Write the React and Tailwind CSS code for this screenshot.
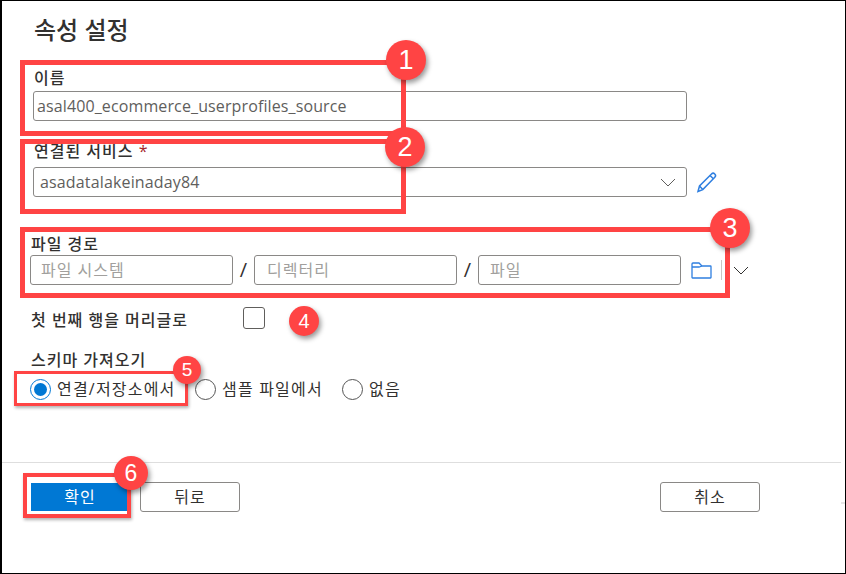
const FONT = "font-['Open_Sans','Noto_Sans_CJK_KR',sans-serif]"

const Badge = ({ n, className }) => (
  <div className={`absolute flex items-center justify-center rounded-full bg-[#ff4444] text-white shadow-[2px_3px_5px_rgba(0,0,0,0.4)] font-['Liberation_Sans',sans-serif] ${className}`}>
    {n}
  </div>
)

const Chevron = ({ className }) => (
  <svg className={className} width="16" height="9" viewBox="0 0 16 9" fill="none" stroke="currentColor" strokeWidth="1">
    <path d="M1 1l7 7 7-7" />
  </svg>
)

const Radio = ({ checked, label, className }) => (
  <label className={`flex items-center ${className}`}>
    <span className={`flex h-[21px] w-[21px] shrink-0 items-center justify-center rounded-full border ${checked ? 'border-[#0078d4]' : 'border-[#555]'}`}>
      {checked && <span className="h-[13px] w-[13px] rounded-full bg-[#0078d4]" />}
    </span>
    <span className="ml-[6px] text-[16px] tracking-[1.2px] text-[#323130]">{label}</span>
  </label>
)

const Label = ({ children, className = '' }) => (
  <div className={`text-[16px] font-medium leading-[20px] tracking-[1px] text-[#323130] ${className}`}>{children}</div>
)

const field = 'h-[30px] rounded-[3px] border border-[#8a8886] bg-white outline-none'

export default function App() {
  return (
    <div className={`relative h-[574px] w-[846px] overflow-hidden border-b border-l-2 border-r border-t border-black bg-white ${FONT}`}>
      <div className="flex h-[461px] flex-col">
        <h1 className="ml-[32px] mt-[13px] text-[24px] font-medium leading-[32px] text-[#323130]">속성 설정</h1>

        <Label className="ml-[32px] mt-[22px]">이름</Label>
        <input
          readOnly
          value="asal400_ecommerce_userprofiles_source"
          className={`${field} ml-[31px] mt-[3px] w-[654px] px-[3px] text-[16px] tracking-[0.12px] text-[#605e5c]`}
        />

        <Label className="ml-[32px] mt-[20px]">
          연결된 서비스 <span className="text-[#a4262c]">*</span>
        </Label>
        <div className="ml-[31px] mt-[6px] flex items-center">
          <div className={`${field} flex w-[654px] items-center justify-between pl-[6px] pr-[10px] text-[16px] tracking-[0.15px] text-[#605e5c]`}>
            asadatalakeinaday84
            <Chevron className="text-[#605e5c]" />
          </div>
          <svg className="ml-[9px] text-[#2f7fe0]" width="22" height="22" viewBox="0 0 22 22" fill="none" stroke="currentColor" strokeWidth="1.5">
            <path d="M2 20.5l1.5-5.5L15.5 3a2.2 2.2 0 0 1 3.3 3.2L6.8 18.6z" />
            <path d="M3.5 15l3.3 3.6M14 4.5l3.4 3.3" />
          </svg>
        </div>

        <Label className="ml-[29px] mt-[37px]">파일 경로</Label>
        <div className="ml-[28px] mt-[1px] flex items-center">
          <input readOnly placeholder="파일 시스템" className={`${field} w-[203px] px-[10px] text-[16px] tracking-[1px] placeholder:text-[#a19f9d]`} />
          <span className="w-[21px] text-center text-[20px] text-[#323130]">/</span>
          <input readOnly placeholder="디렉터리" className={`${field} w-[203px] px-[12px] text-[16px] tracking-[1px] placeholder:text-[#a19f9d]`} />
          <span className="w-[21px] text-center text-[20px] text-[#323130]">/</span>
          <input readOnly placeholder="파일" className={`${field} w-[203px] px-[11px] text-[16px] tracking-[1px] placeholder:text-[#a19f9d]`} />
          <svg className="ml-[10px] text-[#2f7fe0]" width="21" height="17" viewBox="0 0 21 17" fill="none" stroke="currentColor" strokeWidth="1.3">
            <path d="M1 15.5V2a1 1 0 0 1 1-1h6l3 3h8.5a.5.5 0 0 1 .5.5v11a.5.5 0 0 1-.5.5H1.5a.5.5 0 0 1-.5-.5z" />
            <path d="M1 5h7l3-1" />
          </svg>
          <div className="ml-[9px] h-[20px] w-px bg-[#c8c6c4]" />
          <Chevron className="ml-[11px] text-[#323130]" />
        </div>

        <div className="ml-[29px] mt-[22px] flex items-center">
          <Label className="mb-[-2px] mt-[2px] w-[212px] tracking-[1.2px]">첫 번째 행을 머리글로</Label>
          <div className="h-[22px] w-[22px] rounded-[3px] border border-[#605e5c]" />
        </div>

        <Label className="ml-[29px] mt-[21px]">스키마 가져오기</Label>
        <div className="ml-[28px] mt-[7px] flex items-center">
          <Radio checked label="연결/저장소에서" className="w-[165px]" />
          <Radio label="샘플 파일에서" className="w-[147px]" />
          <Radio label="없음" />
        </div>
      </div>

      <div className="w-[839px] border-t border-[#dedede]" />

      <div className="mr-[85px] mt-[19px] flex items-center">
        <button className="ml-[29px] h-[28px] w-[96px] pl-[2px] bg-[#0078d4] text-[16px] tracking-[1px] text-white">확인</button>
        <button className="ml-[13px] h-[30px] w-[100px] rounded-[3px] border border-[#8a8886] text-[16px] tracking-[1px] text-[#323130]">뒤로</button>
        <button className="ml-auto h-[30px] w-[100px] rounded-[3px] border border-[#8a8886] text-[16px] tracking-[1px] text-[#323130]">취소</button>
      </div>

      {/* annotations drawn over the form */}
      <div className="absolute left-[18px] top-[59px] h-[76px] w-[386px] border-[5px] border-[#ff4444]" />
      <div className="absolute left-[18px] top-[138px] h-[75px] w-[386px] border-[5px] border-[#ff4444]" />
      <div className="absolute left-[18px] top-[226px] h-[71px] w-[710px] border-[5px] border-[#ff4444]" />
      <div className="absolute left-[12px] top-[370px] h-[35px] w-[174px] border-[3px] border-[#ff4444] shadow-[1px_2px_3px_rgba(0,0,0,0.3)]" />
      <div className="absolute left-[21px] top-[472px] h-[45px] w-[108px] border-[4px] border-[#ff4444] shadow-[1px_2px_3px_rgba(0,0,0,0.3)]" />

      <Badge n="1" className="left-[384px] top-[39px] h-[40px] w-[40px] text-[27px]" />
      <Badge n="2" className="left-[383px] top-[126px] h-[40px] w-[40px] text-[27px]" />
      <Badge n="3" className="left-[708px] top-[207px] h-[40px] w-[40px] text-[27px]" />
      <Badge n="4" className="left-[287px] top-[305px] h-[30px] w-[30px] text-[20px]" />
      <Badge n="5" className="left-[171px] top-[355px] h-[28px] w-[28px] text-[19px]" />
      <Badge n="6" className="left-[112px] top-[455px] h-[34px] w-[34px] text-[23px]" />

      <div className="absolute right-0 top-[501px] h-[2px] w-[4px] bg-[#e6e6e6]" />
    </div>
  )
}
